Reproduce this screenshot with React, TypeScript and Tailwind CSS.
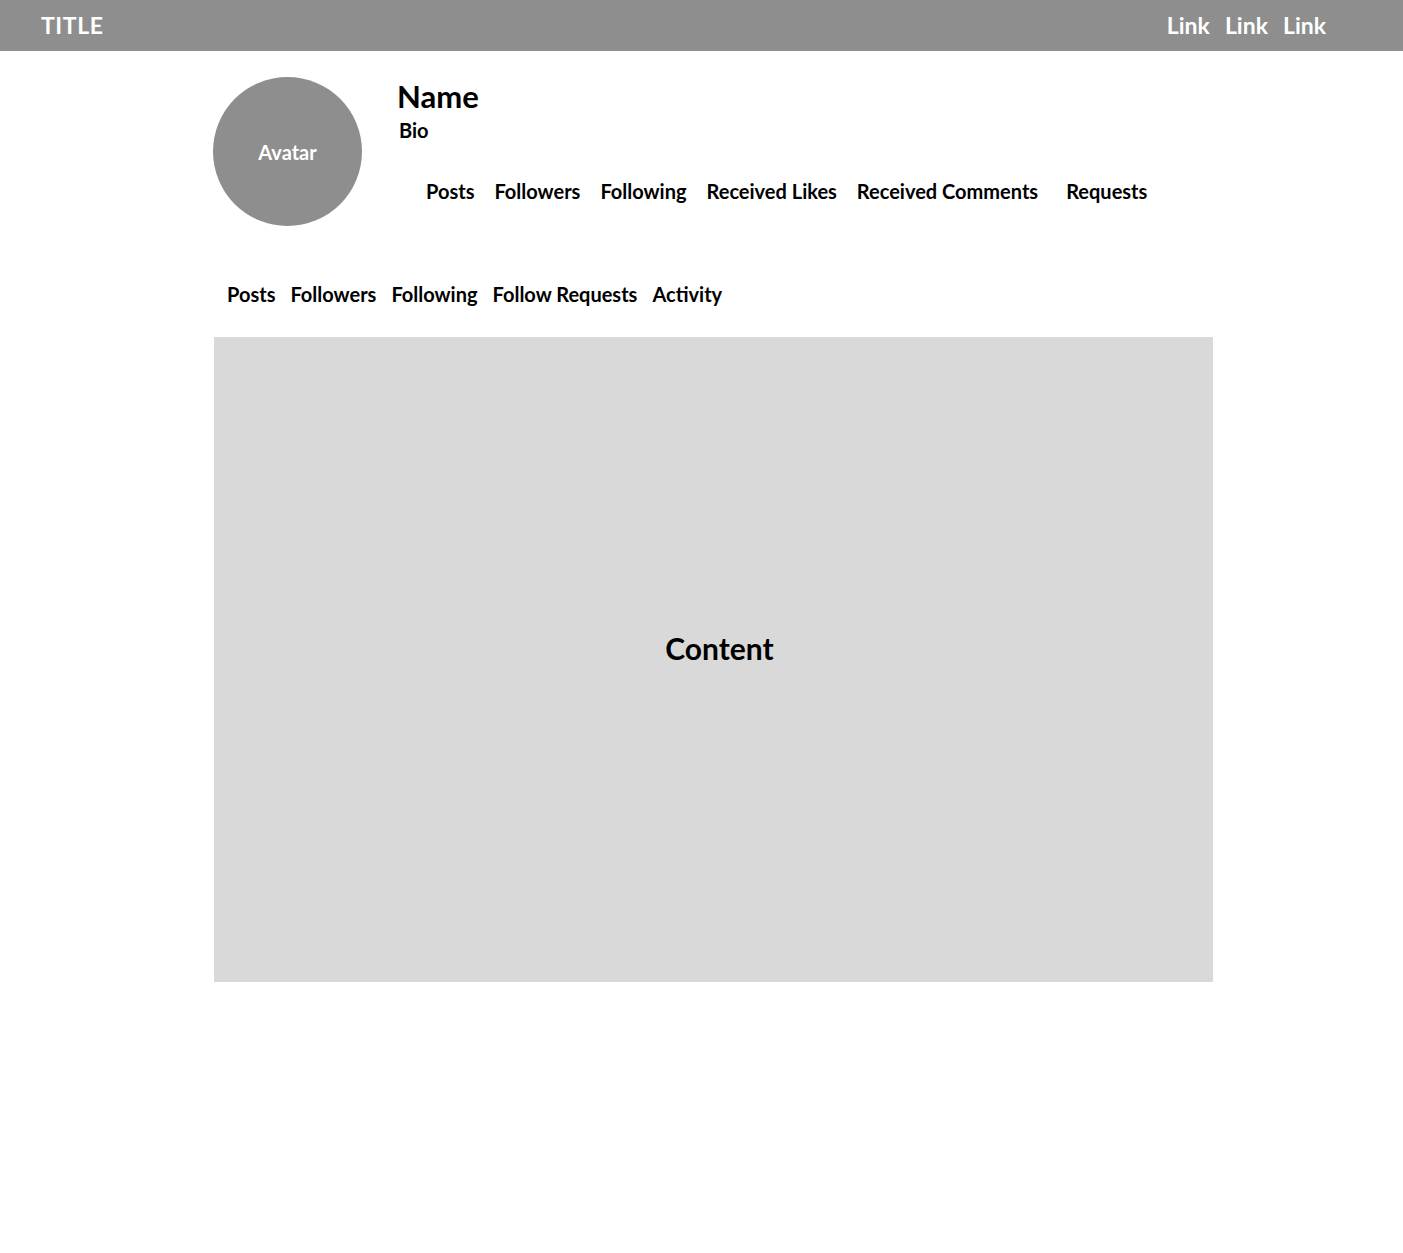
import React from 'react';

const stats = ['Posts', 'Followers', 'Following', 'Received Likes', 'Received Comments', 'Requests'];
const tabs = ['Posts', 'Followers', 'Following', 'Follow Requests', 'Activity'];

export default function App() {
  return (
    <div className="min-h-[1253px] bg-white text-black" style={{ fontFamily: 'Lato, "Open Sans", sans-serif' }}>
      {/* Top bar */}
      <header className="h-[51px] bg-[#8e8e8e] flex items-center justify-between pl-[41px] pr-[77px]">
        <span className="text-white text-[23px] font-bold tracking-wide">TITLE</span>
        <nav className="flex items-center gap-[15px]">
          <a className="text-white text-[23px] font-bold">Link</a>
          <a className="text-white text-[23px] font-bold">Link</a>
          <a className="text-white text-[23px] font-bold">Link</a>
        </nav>
      </header>

      <main className="ml-[213px] w-[1000px]">
        {/* Profile header */}
        <section className="flex pt-[26px]">
          <div className="w-[149px] h-[149px] rounded-full bg-[#8e8e8e] flex items-center justify-center shrink-0">
            <span className="text-white text-[20px] font-bold">Avatar</span>
          </div>
          <div className="ml-[35px] flex flex-col">
            <h1 className="text-[31px] font-bold leading-none mt-[4px]">Name</h1>
            <p className="text-[20px] font-bold leading-none mt-[8px] ml-[2px]">Bio</p>
            <div className="flex items-center mt-[41px] ml-[29px]">
              {stats.map((s, i) => (
                <span key={s} className={`text-[20px] font-bold leading-none ${i === 0 ? '' : i === 5 ? 'ml-[28px]' : 'ml-[20px]'}`}>{s}</span>
              ))}
            </div>
          </div>
        </section>

        {/* Tabs */}
        <nav className="flex items-center gap-[15px] pl-[14px] mt-[58px]">
          {tabs.map(t => (
            <span key={t} className="text-[20px] font-bold leading-none">{t}</span>
          ))}
        </nav>

        {/* Content */}
        <section className="mt-[33px] ml-[1px] w-[999px] h-[645px] bg-[#d9d9d9] flex items-center justify-center">
          <span className="text-[30px] font-bold pl-[12px] pb-[22px]">Content</span>
        </section>
      </main>
    </div>
  );
}
